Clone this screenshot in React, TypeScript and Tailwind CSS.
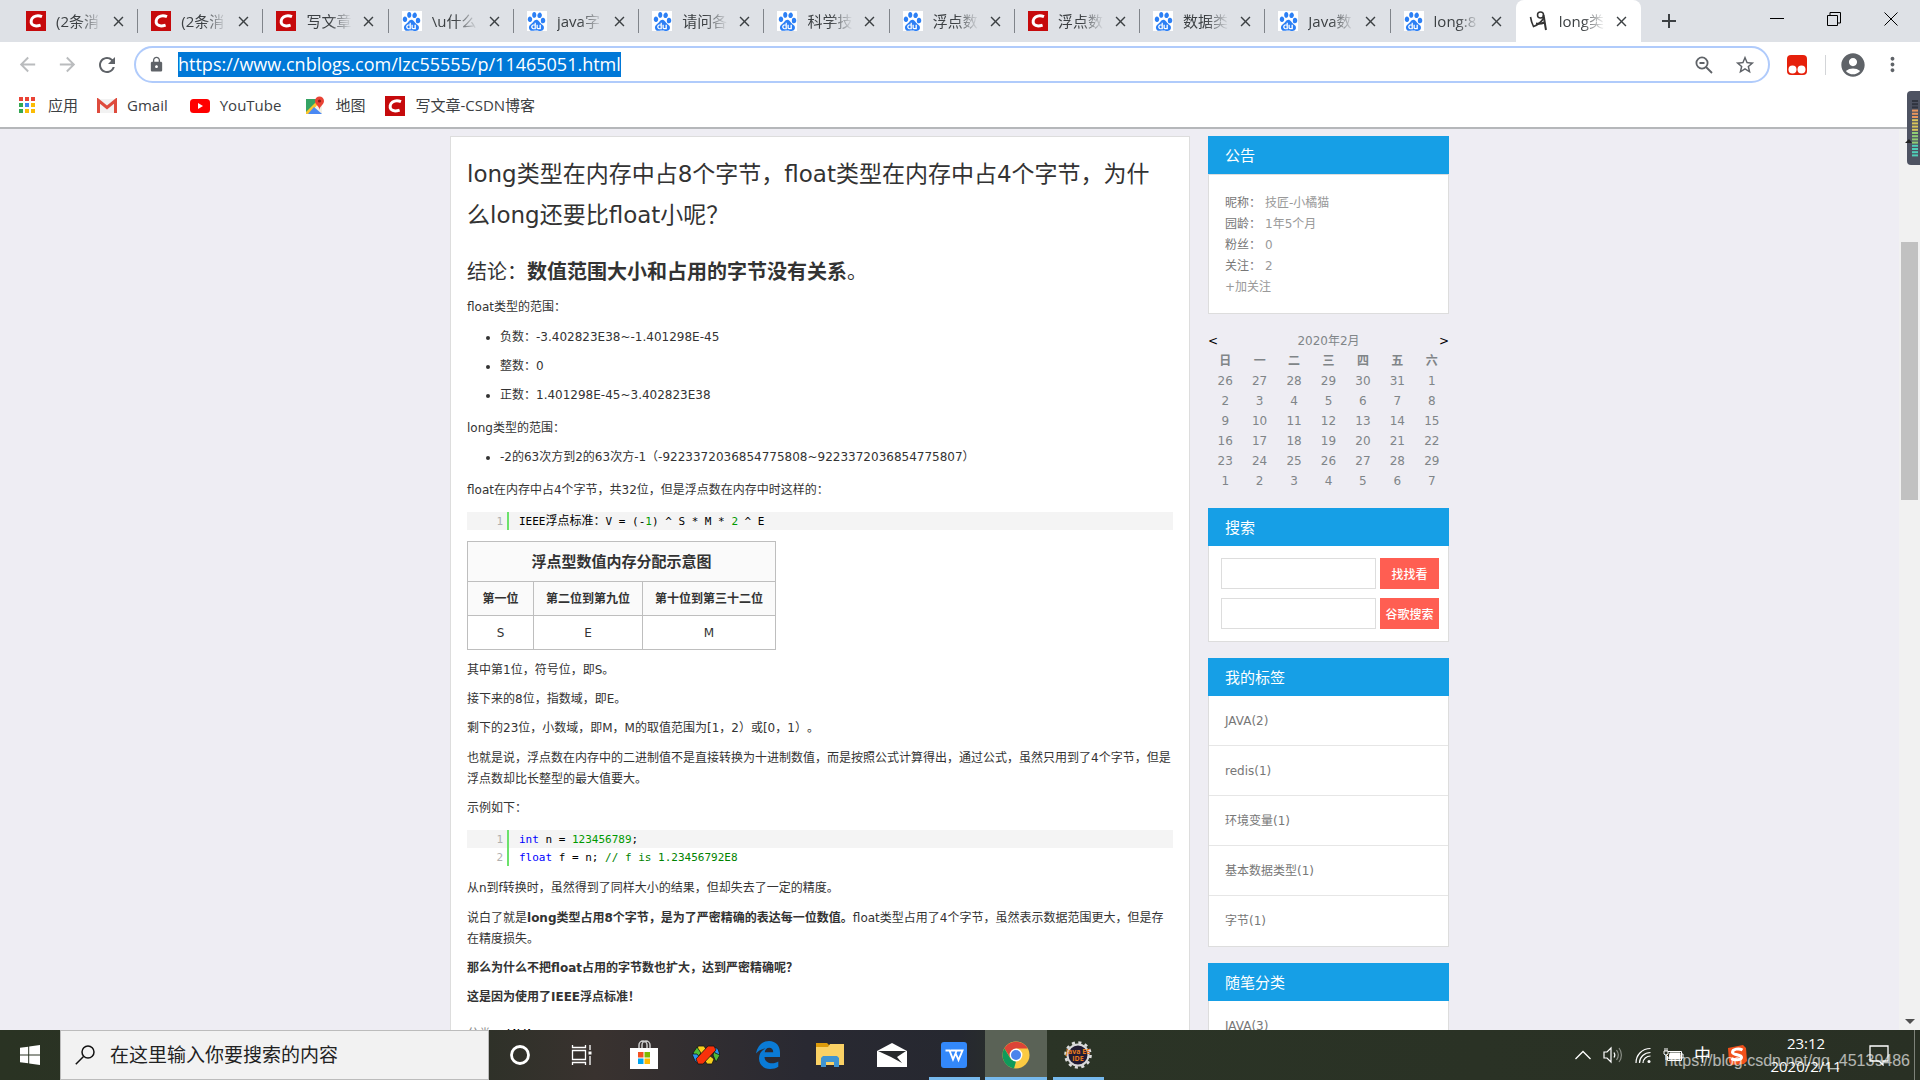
import * as React from "react";
import {
  MdAccountCircle,
  MdAdd,
  MdArrowBack,
  MdArrowForward,
  MdClose,
  MdLock,
  MdMoreVert,
  MdRefresh,
  MdStarBorder,
} from "react-icons/md";
import { SiBaidu } from "react-icons/si";

type Favicon = "csdn" | "baidu" | "cnblogs";

const tabs: { icon: Favicon; title: string; active?: boolean }[] = [
  { icon: "csdn", title: "(2条消" },
  { icon: "csdn", title: "(2条消" },
  { icon: "csdn", title: "写文章" },
  { icon: "baidu", title: "\\u什么" },
  { icon: "baidu", title: "java字" },
  { icon: "baidu", title: "请问各" },
  { icon: "baidu", title: "科学技" },
  { icon: "baidu", title: "浮点数" },
  { icon: "csdn", title: "浮点数" },
  { icon: "baidu", title: "数据类" },
  { icon: "baidu", title: "Java数" },
  { icon: "baidu", title: "long:8" },
  { icon: "cnblogs", title: "long类", active: true },
];

const profile = [
  ["昵称：", "技匠-小橘猫"],
  ["园龄：", "1年5个月"],
  ["粉丝：", "0"],
  ["关注：", "2"],
];

const weekdays = ["日", "一", "二", "三", "四", "五", "六"];

const weeks = [
  [26, 27, 28, 29, 30, 31, 1],
  [2, 3, 4, 5, 6, 7, 8],
  [9, 10, 11, 12, 13, 14, 15],
  [16, 17, 18, 19, 20, 21, 22],
  [23, 24, 25, 26, 27, 28, 29],
  [1, 2, 3, 4, 5, 6, 7],
];

const tags = ["JAVA(2)", "redis(1)", "环境变量(1)", "基本数据类型(1)", "字节(1)"];

function CsdnIcon() {
  return (
    <svg viewBox="0 0 20 20" className="size-5 shrink-0">
      <rect width="20" height="20" fill="#c60a0c" />
      <path
        d="M16 5.6C13.6 4.6 10 4.4 7.6 6 5 7.7 4.4 11.3 6 13.3c1.7 1.9 5.5 1.8 8.6.8"
        fill="none"
        stroke="#fff"
        strokeWidth="3"
      />
    </svg>
  );
}

function TabIcon({ icon }: { icon: Favicon }) {
  if (icon === "csdn") return <CsdnIcon />;
  if (icon === "baidu")
    return (
      <span className="flex size-5 shrink-0 items-center justify-center bg-white text-[#2b7ff5]">
        <SiBaidu size={19} />
      </span>
    );
  return (
    <svg viewBox="0 0 20 20" className="size-5 shrink-0" fill="none" stroke="#333">
      <path d="M1.500 6c.5 3 1.500 6.500 3 9.500 4-1.500 8-4.500 10.500-9" strokeWidth="1.6" />
      <circle cx="11.5" cy="4" r="3" strokeWidth="1.5" />
      <path d="M7 12.500c3 .5 6 0 9-1M14.500 4c1 5 1.500 10 2.500 15" strokeWidth="2" />
    </svg>
  );
}

function TabStrip() {
  return (
    <header className="flex h-[42px] shrink-0 bg-[#dee1e6] pl-[13px]">
      <div role="tablist" className="flex min-w-0 flex-1">
        {tabs.map((tab, i) => (
          <div
            key={i}
            role="tab"
            aria-selected={!!tab.active}
            className={
              tab.active
                ? "flex min-w-0 flex-1 items-center rounded-t-lg bg-white"
                : "flex min-w-0 flex-1 items-center"
            }
          >
            <div className="flex min-w-0 flex-1 items-center pl-[13px]">
              <TabIcon icon={tab.icon} />
              <span className="ml-2.5 w-[46px] overflow-hidden text-[15px] whitespace-nowrap text-[#3c4043] [mask-image:linear-gradient(to_right,#000_50%,transparent)]">
                {tab.title}
              </span>
              <button aria-label="关闭" className="ml-2 text-[#3c4043]">
                <MdClose size={17} stroke="currentColor" />
              </button>
            </div>
            {!tab.active && i !== tabs.length - 2 && <span className="h-6 w-px bg-[#80848a]" />}
          </div>
        ))}
      </div>
      <div className="flex w-[279px] items-center justify-between pr-[22px] pl-4">
        <button aria-label="新标签页" className="text-[#3c4043]">
          <MdAdd size={24} />
        </button>
        <div className="flex items-center gap-[43px] pb-1">
          <button aria-label="最小化">
            <svg viewBox="0 0 14 14" className="size-3.5" stroke="#000" fill="none">
              <path d="M0 6.5h14" />
            </svg>
          </button>
          <button aria-label="还原">
            <svg viewBox="0 0 14 14" className="size-3.5" stroke="#000" fill="none">
              <path d="M.5 3.500h10v10h-10zM3 3.500v-3h10.500v10.500h-3" />
            </svg>
          </button>
          <button aria-label="关闭窗口">
            <svg viewBox="0 0 14 14" className="size-3.5" stroke="#000" fill="none">
              <path d="M.5.5l13 13M13.500.5l-13 13" />
            </svg>
          </button>
        </div>
      </div>
    </header>
  );
}

function Toolbar() {
  return (
    <div className="flex h-[45px] shrink-0 items-center bg-white px-4 text-[#5f6368]">
      <button aria-label="后退" className="text-[#babcbe]">
        <MdArrowBack size={23} />
      </button>
      <button aria-label="前进" className="ml-[17px] text-[#babcbe]">
        <MdArrowForward size={23} />
      </button>
      <button aria-label="刷新" className="ml-4">
        <MdRefresh size={24} />
      </button>
      <div className="ml-[15px] flex h-[37px] min-w-0 flex-1 items-center rounded-full border-2 border-[#b0cbfb] px-3">
        <MdLock size={17} className="mr-[13px] shrink-0" />
        <input
          aria-label="地址"
          defaultValue="https://www.cnblogs.com/lzc55555/p/11465051.html"
          className="h-[25px] bg-[#0078d7] text-[18px] leading-[25px] text-white [field-sizing:content]"
        />
        <span className="flex-1" />
        <button aria-label="缩放">
          <svg viewBox="0 0 18 18" className="size-[18px]" fill="none" stroke="currentColor" strokeWidth="1.8">
            <circle cx="7" cy="7" r="5.6" />
            <path d="M11 11l6 6M4.500 7h5" />
          </svg>
        </button>
        <button aria-label="收藏" className="ml-[21px]">
          <MdStarBorder size={22} />
        </button>
      </div>
      <svg viewBox="0 0 20 20" className="ml-[17px] size-5">
        <rect width="20" height="20" rx="4" fill="#e6200b" />
        <circle cx="5.5" cy="14.5" r="4" fill="#fff" />
        <circle cx="14.5" cy="14.5" r="4" fill="#fff" />
      </svg>
      <span className="ml-[18px] h-5 w-px bg-[#d3d5d8]" />
      <button aria-label="账户" className="ml-[13px]">
        <MdAccountCircle size={28} />
      </button>
      <button aria-label="更多" className="ml-3.5">
        <MdMoreVert size={23} />
      </button>
    </div>
  );
}

function BookmarksBar() {
  const dots = ["#ea4335", "#ea4335", "#ea4335", "#34a853", "#4285f4", "#fbbc05", "#34a853", "#fbbc05", "#fbbc05"];
  return (
    <nav className="flex h-[42px] shrink-0 items-center border-b-2 border-[#b5b7ba] bg-white pb-[3px] pl-[19px] text-[15px] text-[#3c4043]">
      <a href="#apps" className="flex items-center gap-3">
        <svg viewBox="0 0 17 17" className="size-[17px]">
          {dots.map((color, i) => (
            <rect key={i} x={(i % 3) * 6} y={Math.floor(i / 3) * 6} width="4" height="4" fill={color} />
          ))}
        </svg>
        应用
      </a>
      <a href="#gmail" className="ml-[19px] flex items-center gap-2.5">
        <svg viewBox="0 0 20 16" className="h-4 w-5">
          <path d="M2 1h16v14H2z" fill="#f2f2f2" />
          <path d="M1.500 15V2.500L10 9.500l8.500-7V15" fill="none" stroke="#de4b3d" strokeWidth="3" />
        </svg>
        Gmail
      </a>
      <a href="#youtube" className="ml-[22px] flex items-center gap-2.5">
        <svg viewBox="0 0 20 14" className="h-3.5 w-5">
          <rect width="20" height="14" rx="3.5" fill="#f00" />
          <path d="M8 4v6l5-3z" fill="#fff" />
        </svg>
        YouTube
      </a>
      <a href="#maps" className="ml-6 flex items-center gap-2.5">
        <svg viewBox="0 0 20 20" className="size-5">
          <path d="M1 3h14v15H1z" fill="#34a364" />
          <path d="M2 18L14 6l3 2v10z" fill="#f4f1e6" />
          <path d="M1 16l12-12 2 2L4 18H1z" fill="#fbc52d" />
          <path d="M9 11l8 7H3z" fill="#4a89f3" />
          <path d="M14.500 14c0-4-4.500-5-4.500-9a4.500 4.500 0 0 1 9 0c0 4-4.500 5-4.500 9z" fill="#e94335" />
          <circle cx="14.5" cy="5" r="1.6" fill="#8c1f17" />
        </svg>
        地图
      </a>
      <a href="#csdn" className="ml-5 flex items-center gap-2.5">
        <CsdnIcon />
        写文章-CSDN博客
      </a>
    </nav>
  );
}

function CodeBlock({ lines }: { lines: React.ReactNode[] }) {
  return (
    <div className="my-[3px] font-['DejaVu_Sans_Mono','Noto_Sans_CJK_SC',monospace] text-[11px] text-black">
      {lines.map((line, i) => (
        <div key={i} className={i % 2 === 0 ? "flex h-[18px] items-center bg-[#f4f4f4]" : "flex h-[18px] items-center"}>
          <span className="w-9 text-right text-[#afafaf]">{i + 1}</span>
          <span className="ml-1 h-full w-0.5 bg-[#6ce26c]" />
          <code className="ml-2.5 font-[inherit] whitespace-pre">{line}</code>
        </div>
      ))}
    </div>
  );
}

function Article() {
  return (
    <article className="min-w-0 flex-1 border border-[#ddd] bg-white px-4 pt-[17px] text-xs leading-[21px] text-[#333]">
      <h1 className="pr-4 text-[23px] leading-[41px]">
        long类型在内存中占8个字节，float类型在内存中占4个字节，为什么long还要比float小呢？
      </h1>
      <h2 className="mt-[21px] mb-2.5 text-xl leading-[30px]">
        结论：<strong>数值范围大小和占用的字节没有关系</strong>。
      </h2>
      <div className="flex flex-col gap-2">
        <p>float类型的范围：</p>
        <ul className="mt-px mb-1 flex list-disc flex-col gap-2 pl-[33px]">
          <li>负数：-3.402823E38~-1.401298E-45</li>
          <li>整数：0</li>
          <li>正数：1.401298E-45~3.402823E38</li>
        </ul>
        <p>long类型的范围：</p>
        <ul className="mb-1 list-disc pl-[33px]">
          <li>-2的63次方到2的63次方-1（-9223372036854775808~9223372036854775807）</li>
        </ul>
        <p>float在内存中占4个字节，共32位，但是浮点数在内存中时这样的：</p>
        <CodeBlock
          lines={[
            <>
              IEEE<span className="text-xs">浮点标准：</span>V = (-<span className="text-[#090]">1</span>) ^ S * M *{" "}
              <span className="text-[#090]">2</span> ^ E
            </>,
          ]}
        />
        <table className="mb-0.5 w-[309px] border-collapse text-center [&_td]:border [&_td]:border-[#bebebe] [&_th]:border [&_th]:border-[#bebebe] [&_th]:bg-[#fafafa]">
          <thead>
            <tr className="h-10">
              <th colSpan={3} className="pt-0.5 text-[15px]">
                浮点型数值内存分配示意图
              </th>
            </tr>
            <tr className="h-[34px]">
              <th className="w-[66px] pt-0.5">第一位</th>
              <th className="w-[109px] pt-0.5">第二位到第九位</th>
              <th className="pt-0.5">第十位到第三十二位</th>
            </tr>
          </thead>
          <tbody>
            <tr className="h-[34px]">
              <td className="pt-0.5">S</td>
              <td className="pt-0.5">E</td>
              <td className="pt-0.5">M</td>
            </tr>
          </tbody>
        </table>
        <p>其中第1位，符号位，即S。</p>
        <p>接下来的8位，指数域，即E。</p>
        <p>剩下的23位，小数域，即M，M的取值范围为[1，2）或[0，1）。</p>
        <p className="mt-px">
          也就是说，浮点数在内存中的二进制值不是直接转换为十进制数值，而是按照公式计算得出，通过公式，虽然只用到了4个字节，但是浮点数却比长整型的最大值要大。
        </p>
        <p>示例如下：</p>
        <CodeBlock
          lines={[
            <>
              <span className="text-[#00f]">int</span> n = <span className="text-[#090]">123456789</span>;
            </>,
            <>
              <span className="text-[#00f]">float</span> f = n; <span className="text-[#008200]">// f is 1.23456792E8</span>
            </>,
          ]}
        />
        <p className="mt-px">从n到f转换时，虽然得到了同样大小的结果，但却失去了一定的精度。</p>
        <p className="mt-px">
          说白了就是<strong>long类型占用8个字节，是为了严密精确的表达每一位数值。</strong>
          float类型占用了4个字节，虽然表示数据范围更大，但是存在精度损失。
        </p>
        <p>
          <strong>那么为什么不把float占用的字节数也扩大，达到严密精确呢？</strong>
        </p>
        <p>
          <strong>这是因为使用了IEEE浮点标准！</strong>
        </p>
        <p className="mt-2 text-[#888]">
          分类： <a href="#java" className="text-black">JAVA</a>
        </p>
      </div>
    </article>
  );
}

function PanelTitle({ children }: { children: React.ReactNode }) {
  return <h3 className="bg-[#169fe6] px-[17px] pt-0.5 text-[15px] leading-9 text-white">{children}</h3>;
}

function Sidebar() {
  return (
    <aside className="w-[241px] shrink-0 text-xs text-[#777]">
      <section>
        <PanelTitle>公告</PanelTitle>
        <div className="border border-[#ddd] bg-white px-4 pt-[18px] pb-[15px] leading-[21px]">
          {profile.map(([label, value]) => (
            <p key={label} className="flex">
              <span className="w-10">{label}</span>
              <a href="#profile" className="text-[#999]">
                {value}
              </a>
            </p>
          ))}
          <a href="#follow" className="text-[#999]">
            +加关注
          </a>
        </div>
      </section>

      <table className="mt-[17px] w-full table-fixed text-center leading-5 text-[#808588]">
        <caption>
          <div className="flex justify-between">
            <a href="#prev" className="text-black">
              &lt;
            </a>
            2020年2月
            <a href="#next" className="text-black">
              &gt;
            </a>
          </div>
        </caption>
        <thead>
          <tr>
            {weekdays.map((day) => (
              <th key={day}>{day}</th>
            ))}
          </tr>
        </thead>
        <tbody>
          {weeks.map((week, i) => (
            <tr key={i}>
              {week.map((day) => (
                <td key={day}>{day}</td>
              ))}
            </tr>
          ))}
        </tbody>
      </table>

      <section className="mt-[17px]">
        <PanelTitle>搜索</PanelTitle>
        <div className="flex flex-col gap-[9px] border border-t-0 border-[#ddd] bg-white py-3 pr-[9px] pl-3">
          {["找找看", "谷歌搜索"].map((label) => (
            <form key={label} className="flex gap-1" onSubmit={(e) => e.preventDefault()}>
              <input aria-label={label} className="h-[31px] min-w-0 flex-1 border border-[#ddd] bg-white px-2" />
              <button className="h-[31px] w-[59px] bg-[#ff5e52] pt-0.5 font-medium whitespace-nowrap text-white">
                {label}
              </button>
            </form>
          ))}
        </div>
      </section>

      <section className="mt-4">
        <PanelTitle>我的标签</PanelTitle>
        <ul className="border border-t-0 border-[#ddd] bg-white">
          {tags.map((tag) => (
            <li key={tag} className="h-[50px] border-b border-[#e6e6e6] px-4 leading-[50px] last:border-b-0">
              <a href="#tag">{tag}</a>
            </li>
          ))}
        </ul>
      </section>

      <section className="mt-4">
        <PanelTitle>随笔分类</PanelTitle>
        <ul className="border border-t-0 border-[#ddd] bg-white">
          <li className="h-[50px] px-4 leading-[50px]">
            <a href="#category">JAVA(3)</a>
          </li>
        </ul>
      </section>
    </aside>
  );
}

function Scrollbar() {
  return (
    <div className="flex w-[21px] shrink-0 flex-col items-center justify-between bg-[#f1f1f1] pb-1.5">
      <div className="mt-[113px] h-[258px] w-[17px] bg-[#c1c1c1]" />
      <svg viewBox="0 0 10 5" className="h-[5px] w-2.5">
        <path d="M0 0h10L5 5z" fill="#505050" />
      </svg>
    </div>
  );
}

// floating level meter docked to the right screen edge
function LevelMeter() {
  const bars = Array.from({ length: 18 }, (_, i) => i);
  return (
    <svg viewBox="0 0 15 74" className="absolute top-[91px] right-0 h-[74px] w-[15px]">
      <path d="M6 0h9v74H6a4 4 0 0 1-4-4V4a4 4 0 0 1 4-4z" fill="#4e5362" />
      {bars.map((i) => (
        <rect
          key={i}
          x="7"
          y={9 + i * 3.2}
          width="6"
          height="2"
          fill={i < 3 ? "#30343f" : i < 6 ? "#e9965c" : i < 10 ? "#d9c65a" : i < 14 ? "#8fce74" : "#4fd0b8"}
        />
      ))}
      <path d="M0 52l4-4 3 4z" fill="#222" />
    </svg>
  );
}

function TaskButton({
  label,
  open,
  active,
  children,
}: {
  label: string;
  open?: boolean;
  active?: boolean;
  children: React.ReactNode;
}) {
  return (
    <button
      aria-label={label}
      className={
        active
          ? "flex h-full w-[62px] flex-col items-center justify-between bg-[#5a6256]"
          : "flex h-full w-[62px] flex-col items-center justify-between"
      }
    >
      <span className="flex flex-1 items-center pt-[3px]">{children}</span>
      <span className={open ? (active ? "h-[3px] w-full bg-[#76b9ed]" : "h-[3px] w-[51px] bg-[#76b9ed]") : "h-[3px]"} />
    </button>
  );
}

function Taskbar() {
  return (
    <footer className="relative flex h-[50px] shrink-0 items-center bg-[linear-gradient(to_right,#2a3323_0%,#2c3127_24%,#39322f_31%,#292932_42%,#262830_50%,#2b3426_54%,#293024_100%)] text-white">
      <button aria-label="开始" className="flex w-[60px] justify-center">
        <svg viewBox="0 0 20 20" className="size-5" fill="#fff">
          <path d="M0 2.800L8.200 1.700v7.800H0zM9.200 1.500L20 0v9.500H9.200zM0 10.500h8.200v7.800L0 17.200zM9.200 10.500H20V20L9.200 18.500z" />
        </svg>
      </button>
      <label className="flex h-full w-[429px] items-center border border-[#bcbcbc] bg-[#f2f2f2] pl-3.5">
        <svg viewBox="0 0 20 20" className="size-5 shrink-0" fill="none" stroke="#111" strokeWidth="1.5">
          <circle cx="13" cy="7" r="6" />
          <path d="M8.500 11.500L.8 19.200" />
        </svg>
        <input
          aria-label="搜索"
          placeholder="在这里输入你要搜索的内容"
          className="ml-[15px] min-w-0 flex-1 text-[19px] placeholder:text-[#222]"
        />
      </label>
      <TaskButton label="Cortana">
        <svg viewBox="0 0 22 22" className="size-[22px]" fill="none" stroke="#fff" strokeWidth="2.8">
          <circle cx="11" cy="11" r="8.5" />
        </svg>
      </TaskButton>
      <TaskButton label="任务视图">
        <svg viewBox="0 0 22 22" className="size-[22px]" fill="none" stroke="#fff" strokeWidth="1.3">
          <path d="M1.500 6.500h13v9h-13zM1.500 1v2.500h13V1M1.500 21v-2.500h13V21M19 1v5M19 12v9" />
          <path d="M17.500 7.500h3v3h-3z" fill="#fff" stroke="none" />
        </svg>
      </TaskButton>
      <TaskButton label="应用商店">
        <svg viewBox="0 0 30 30" className="size-[30px]">
          <path d="M10 8V5a4 4 0 0 1 8 0v3M13 8V5a4 4 0 0 1 8 0v3" fill="none" stroke="#ccc" strokeWidth="1.5" />
          <path d="M1 8h28v21H1z" fill="#fff" />
          <path d="M9 12h5.500v5.500H9z" fill="#f25022" />
          <path d="M15.500 12H21v5.500h-5.500z" fill="#7fba00" />
          <path d="M9 18.500h5.500V24H9z" fill="#00a4ef" />
          <path d="M15.500 18.500H21V24h-5.500z" fill="#ffb900" />
        </svg>
      </TaskButton>
      <TaskButton label="Studio">
        <svg viewBox="0 0 28 20" className="h-5 w-7" stroke="#151515" strokeWidth=".8">
          <path d="M6 1h6l3 5-5 4-5-4z" fill="#f7cf1d" />
          <path d="M1 8l4-6 4 6-4 5z" fill="#51bd35" />
          <path d="M0 9l3 7 4 3 2-5-4-5z" fill="#2c93ed" />
          <path d="M15 19l-3-5 5-4 5 4-2 5z" fill="#f7cf1d" />
          <path d="M23 3l5 7-4 7-3-7z" fill="#52b934" />
          <path d="M21 1l5 3 2 6-5-2z" fill="#2c93ed" />
          <path d="M4 14L16 1h6l2 4L11 19H6z" fill="#f9310a" />
        </svg>
      </TaskButton>
      <TaskButton label="Edge">
        <svg viewBox="0 0 24 28" className="h-7 w-6">
          <path
            d="M0 12.500C1.500 5 6.500 0 13 0c7 0 11 5 11 11.500V16H8.500c.3 4.500 4 6.300 7.500 6.300 2.500 0 4.700-.8 6.300-1.900v5.300c-2 1.300-5 2.300-8.300 2.300C7.500 28 3 23.500 3 17.500 3 13 5.500 9.300 9.500 7.500 5.500 8 2 10 0 12.500zM8.700 11.200h8.500c0-2.700-1.400-4.400-4-4.400-2.500 0-4 1.800-4.500 4.400z"
            fill="#0a7bd6"
          />
        </svg>
      </TaskButton>
      <TaskButton label="文件资源管理器">
        <svg viewBox="0 0 28 24" className="h-6 w-7">
          <path d="M0 0h11l3 3v2H0z" fill="#dc9a0a" />
          <path d="M0 4h12l2-3h14v21H0z" fill="#fad165" />
          <path d="M5 24v-9l2-2h14l2 2v9h-5v-5h-8v5z" fill="#3f94d1" />
        </svg>
      </TaskButton>
      <TaskButton label="邮件">
        <svg viewBox="0 0 30 26" className="h-[26px] w-[30px]">
          <path d="M0 9L15 1l15 8v16H0z" fill="#fff" />
          <path d="M1 9h28l-9 6 5 6-11-6z" fill="#272a2c" />
        </svg>
      </TaskButton>
      <TaskButton label="WPS" open>
        <svg viewBox="0 0 26 26" className="size-[26px]">
          <rect width="26" height="26" rx="3" fill="#3388fa" />
          <path
            d="M4.500 8.500h4l3.500 9L15.500 9M9.500 8.500h12L17.500 18l-3-7"
            fill="none"
            stroke="#fff"
            strokeWidth="1.9"
          />
        </svg>
      </TaskButton>
      <TaskButton label="Chrome" open active>
        <svg viewBox="0 0 28 28" className="size-7">
          <circle cx="14" cy="14" r="13.5" fill="#fbca42" />
          <path d="M2.300 7.300A13.500 13.500 0 0 1 25.700 7.500L14 7.600 8.500 17z" fill="#dc4437" />
          <path d="M2.300 7.300L8.300 17.200 14 20.400l-2 7A13.500 13.500 0 0 1 2.300 7.300z" fill="#109a5b" />
          <circle cx="14" cy="14" r="6.4" fill="#fff" />
          <circle cx="14" cy="14" r="5" fill="#4b84ec" />
        </svg>
      </TaskButton>
      <TaskButton label="Java EE IDE" open>
        <svg viewBox="0 0 28 28" className="size-7">
          <circle cx="14" cy="14" r="12.5" fill="none" stroke="#ddd" strokeWidth="2.6" strokeDasharray="3.100 3.440" />
          <circle cx="14" cy="14" r="10.5" fill="#211b33" stroke="#d8d8d8" strokeWidth="2" />
          <text x="14" y="13" textAnchor="middle" fontSize="7" fontWeight="700" fill="#e87b1c">
            Java EE
          </text>
          <text x="14" y="20" textAnchor="middle" fontSize="7" fontWeight="700" fill="#e87b1c">
            IDE
          </text>
        </svg>
      </TaskButton>

      <div className="ml-auto flex h-full items-center">
        <svg viewBox="0 0 16 10" className="h-2.5 w-4" fill="none" stroke="#fff" strokeWidth="1.3">
          <path d="M.5 9L8 1.500 15.500 9" />
        </svg>
        <svg viewBox="0 0 20 18" className="ml-3 h-[18px] w-5" fill="none" stroke="#fff" strokeWidth="1.2">
          <path d="M1 6h3l4-4v14l-4-4H1zM11 6.500c1 1.500 1 3.500 0 5" />
          <path d="M13.500 4c2.200 3 2.200 7 0 10M16 2c3.200 4 3.200 10 0 14" stroke="#8b8f87" />
        </svg>
        <svg viewBox="0 0 16 17" className="ml-3 h-[17px] w-4" fill="none" stroke="#fff" strokeWidth="1.2">
          <path d="M1 16C1 8 7 1.500 15.500 1.500M4.500 16c0-6 5-10.500 11-10.500M8 16c0-4 3.500-7 7.500-7" />
          <circle cx="14" cy="14.5" r="1.5" fill="#fff" stroke="none" />
        </svg>
        <svg viewBox="0 0 21 14" className="ml-3 h-3.5 w-[21px]" fill="none" stroke="#fff">
          <path d="M5 3.500h13.500v9H4.500V8M18.500 6H20v4h-1.500" />
          <path d="M7 5h10v6H6z" fill="#fff" />
          <path d="M1 3h4v3L3 7.500 1 6zM2 3V0M4 3V0M3 7.500V12" />
        </svg>
        <span className="ml-2.5 w-[17px] text-[17px] leading-5">中</span>
        <svg viewBox="0 0 20 20" className="ml-4 size-5">
          <path d="M1 3l15-3 3 3 1 13-3 3-13 1-2-3z" fill="#f1511b" />
          <path d="M15.500 5C12 3 5.500 4 5.500 7.200c0 3 9 2 9 5 0 3-7 3.300-10 1.300" fill="none" stroke="#fff" strokeWidth="3" />
        </svg>
        <time className="ml-[19px] w-20 text-center text-[15px] leading-[23px]">
          23:12
          <br />
          2020/2/11
        </time>
        <svg viewBox="0 0 20 21" className="ml-[23px] h-[21px] w-5" fill="none" stroke="#fff" strokeWidth="1.3">
          <path d="M1 1h18v15h-5v4l-4-4H1z" />
        </svg>
        <span className="mr-[5px] ml-[25px] h-full w-px bg-[#7d8279]" />
      </div>
      <span className="absolute right-2.5 bottom-[9px] font-['Liberation_Sans',sans-serif] text-base leading-5 text-white/65">
        https://blog.csdn.net/qq_45139486
      </span>
    </footer>
  );
}

export default function App() {
  return (
    <div className="relative flex h-screen flex-col overflow-hidden bg-white font-['Open_Sans','Noto_Sans_CJK_SC',sans-serif] [text-spacing-trim:space-all]">
      <TabStrip />
      <Toolbar />
      <BookmarksBar />
      <div className="flex min-h-0 flex-1 overflow-hidden bg-[#eeedf3] font-['DejaVu_Sans','Noto_Sans_CJK_SC',sans-serif]">
        <main className="min-w-0 flex-1 pt-[7px]">
          <div className="mx-auto flex max-w-[999px] gap-[18px]">
            <Article />
            <Sidebar />
          </div>
        </main>
        <Scrollbar />
      </div>
      <Taskbar />
      <LevelMeter />
    </div>
  );
}
